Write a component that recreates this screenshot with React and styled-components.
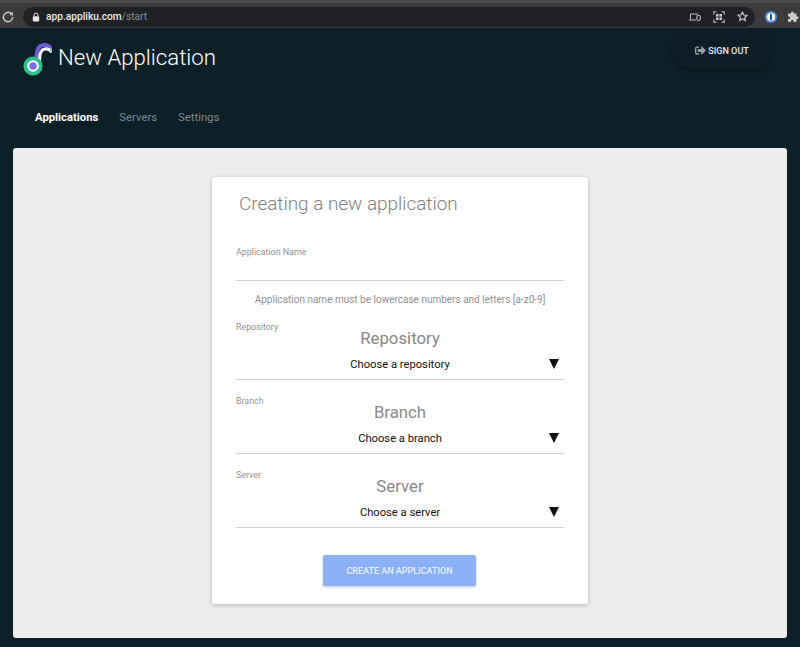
import React from "react";
import styled, { createGlobalStyle } from "styled-components";
import { FaSignOutAlt } from "react-icons/fa";

const Global = createGlobalStyle`
  html, body { margin: 0; padding: 0; background: #0d1f27; }
  body { font-family: Roboto, "Liberation Sans", sans-serif; }
  * { box-sizing: border-box; }
`;

const Page = styled.div`
  width: 800px;
  height: 647px;
  overflow: hidden;
  background: #0d1f27;
`;

const BrowserBar = styled.div`
  height: 28px;
  background: #3b3b3d;
  border-top: 3px solid #4a4a4c;
  display: flex;
  align-items: center;
  padding: 2px 6px 0 1px;
`;

const Reload = styled.svg`
  width: 14px;
  height: 14px;
  flex: none;
  margin-right: 8px;
`;

const UrlPill = styled.div`
  width: 732px;
  height: 20px;
  background: #202124;
  border-radius: 10px;
  display: flex;
  align-items: center;
  padding: 0 7px 0 9px;
  flex: none;
`;

const Lock = styled.svg`
  width: 8px;
  height: 10px;
  margin-right: 6px;
  flex: none;
`;

const Url = styled.span`
  font-size: 10.2px;
  color: #e8eaed;
  flex: 1;
  font-weight: 500;
  span { color: #8f9194; font-weight: 400; }
`;

const PillIcons = styled.div`
  display: flex;
  align-items: center;
  gap: 12px;
`;

const BarIcon = styled.svg`
  width: ${(p) => p.$size || 12}px;
  height: ${(p) => p.$size || 12}px;
  flex: none;
`;

const Extensions = styled.div`
  display: flex;
  align-items: center;
  gap: 10px;
  margin-left: 10px;
`;

const Header = styled.header`
  height: 120px;
  display: flex;
  flex-direction: column;
  padding: 14px 30px 0 23px;
`;

const TopRow = styled.div`
  display: flex;
  align-items: flex-start;
  justify-content: space-between;
  height: 50px;
`;

const Brand = styled.div`
  display: flex;
  align-items: flex-start;
  gap: 6px;
`;

const Title = styled.h1`
  margin: 0;
  font-size: 22.2px;
  line-height: 30px;
  font-weight: 300;
  color: #fff;
`;

const SignOut = styled.button`
  margin-top: -9px;
  width: 96px;
  height: 35px;
  border: none;
  border-radius: 14px;
  background: #0d1d25;
  box-shadow: 0 2px 6px rgba(0, 0, 0, 0.35);
  color: #e9ecee;
  font: 500 9.1px Roboto, sans-serif;
  display: flex;
  align-items: center;
  justify-content: center;
  gap: 2px;
`;

const Nav = styled.nav`
  display: flex;
  gap: 21px;
  padding-left: 12px;
  margin-top: 15px;
`;

const NavItem = styled.span`
  font-size: 11.3px;
  line-height: 22px;
  font-weight: ${(p) => (p.$active ? 700 : 400)};
  color: ${(p) => (p.$active ? "#fff" : "#7e8a90")};
`;

const Panel = styled.main`
  margin: 0 13px;
  height: 490px;
  background: #eeeeee;
  border-radius: 3px;
  padding-top: 29px;
  display: flex;
  justify-content: center;
`;

const Card = styled.section`
  width: 376px;
  height: 427px;
  background: #fff;
  border-radius: 3px;
  box-shadow: 0 1px 4px rgba(0, 0, 0, 0.25);
  padding: 15px 24px 0;
  display: flex;
  flex-direction: column;
`;

const CardTitle = styled.h2`
  margin: 0 0 0 3px;
  font-size: 18.9px;
  line-height: 24px;
  font-weight: 300;
  color: #7f7f7f;
`;

const SmallLabel = styled.label`
  font-size: 8.9px;
  line-height: 12px;
  color: #929292;
  display: block;
  font-weight: 400;
`;

const NameField = styled.div`
  margin-top: 30px;
  height: 35px;
  border-bottom: 1px solid #d4d4d4;
`;

const Hint = styled.p`
  margin: 12px 0 0;
  font-size: 10px;
  line-height: 14px;
  color: #929292;
  text-align: center;
`;

const SelectField = styled.div`
  margin-top: ${(p) => p.$top}px;
  height: 59px;
  border-bottom: 1px solid #d4d4d4;
  position: relative;
`;

const SelectHeading = styled.div`
  font-size: 16.8px;
  line-height: 20px;
  margin-top: -5px;
  color: #888;
  text-align: center;
`;

const SelectValue = styled.div`
  margin-top: 10px;
  font-size: 11.2px;
  line-height: 14px;
  color: #111;
  text-align: center;
`;

const Arrow = styled.svg`
  position: absolute;
  right: 5px;
  bottom: 10px;
  width: 10px;
  height: 10px;
`;

const Create = styled.button`
  align-self: center;
  margin: 27px 0 0 -1px;
  width: 153px;
  height: 31px;
  border: none;
  border-radius: 2px;
  background: #8bb0f7;
  box-shadow: 0 1px 3px rgba(60, 90, 160, 0.35);
  color: #e9f0fe;
  font: 500 9px Roboto, sans-serif;
`;

const Logo = () => (
  <svg width="29" height="34" viewBox="0 0 29 34" fill="none">
    <path d="M13.5 18 C13.5 8 15 3.5 21 3 C24 2.8 26 3.8 27.5 6" stroke="#6a5bd8" strokeWidth="4" strokeLinecap="round" />
    <path d="M16.5 18 C16.5 11.5 18 7.5 22 7 C25 6.6 27 7.6 28 9.4" stroke="#fff" strokeWidth="3.2" strokeLinecap="round" />
    <path d="M27.6 8.6 L28.4 10.2" stroke="#2cc08a" strokeWidth="1.2" strokeLinecap="round" />
    <circle cx="10" cy="24" r="7.7" stroke="#2cc08a" strokeWidth="3.8" fill="#fff" />
    <circle cx="10" cy="24" r="3.7" fill="#7c68e0" />
  </svg>
);

const Field = ({ label, value, top }) => (
  <SelectField $top={top}>
    <SmallLabel>{label}</SmallLabel>
    <SelectHeading>{label}</SelectHeading>
    <SelectValue>{value}</SelectValue>
    <Arrow viewBox="0 0 10 10"><path d="M0 0 H10 L5 10 Z" fill="#111" /></Arrow>
  </SelectField>
);

export default function App() {
  return (
    <Page>
      <Global />
      <BrowserBar>
        <Reload viewBox="0 0 24 24" fill="none" stroke="#c4c7c9" strokeWidth="2.6">
          <path d="M20 12a8 8 0 1 1-2.5-5.8L20 8.5" />
          <path d="M20.5 3v6h-6" fill="#c4c7c9" stroke="none" />
        </Reload>
        <UrlPill>
          <Lock viewBox="0 0 8 10">
            <path d="M2 4.5V3a2 2 0 0 1 4 0v1.5" fill="none" stroke="#e8eaed" strokeWidth="1" />
            <rect x="0.8" y="4.2" width="6.4" height="5.3" rx="1" fill="#e8eaed" />
          </Lock>
          <Url>app.appliku.com<span>/start</span></Url>
          <PillIcons>
            <BarIcon viewBox="0 0 16 14" fill="none" stroke="#c4c7c9" strokeWidth="1.3">
              <path d="M2 10V3h10" />
              <path d="M0 11h9" />
              <rect x="10.5" y="5" width="4.5" height="6.5" rx="0.6" />
            </BarIcon>
            <BarIcon viewBox="0 0 14 14" fill="none" stroke="#c4c7c9" strokeWidth="1.2">
              <path d="M1 4V1h3M10 1h3v3M13 10v3h-3M4 13H1v-3" />
              <rect x="3.5" y="3.5" width="3" height="3" fill="#c4c7c9" stroke="none" />
              <rect x="7.5" y="3.5" width="3" height="3" fill="#c4c7c9" stroke="none" />
              <rect x="3.5" y="7.5" width="3" height="3" fill="#c4c7c9" stroke="none" />
              <rect x="7.5" y="7.5" width="3" height="3" fill="#c4c7c9" stroke="none" />
            </BarIcon>
            <BarIcon $size={11} viewBox="0 0 24 24" fill="none" stroke="#d0d3d5" strokeWidth="2.4">
              <path d="M12 2.5l2.9 6.3 6.9.8-5.1 4.7 1.4 6.8L12 17.2 5.9 20.6l1.4-6.8-5.1-4.7 6.9-.8z" />
            </BarIcon>
          </PillIcons>
        </UrlPill>
        <Extensions>
          <BarIcon $size={12} viewBox="0 0 12 12">
            <circle cx="6" cy="6" r="6" fill="#4d8fdc" />
            <circle cx="6" cy="6" r="4" fill="#fff" />
            <rect x="5" y="2.8" width="2" height="6.4" rx="0.6" fill="#1c4f8e" />
          </BarIcon>
          <BarIcon $size={12} viewBox="0 0 24 24">
            <path d="M20.5 11H19V7a2 2 0 0 0-2-2h-4V3.5a2.5 2.5 0 0 0-5 0V5H4a2 2 0 0 0-2 2v3.8h1.5a2.7 2.7 0 0 1 0 5.4H2V20a2 2 0 0 0 2 2h3.8v-1.5a2.7 2.7 0 0 1 5.4 0V22H17a2 2 0 0 0 2-2v-4h1.5a2.5 2.5 0 0 0 0-5z" fill="#c9cbcd" />
          </BarIcon>
        </Extensions>
      </BrowserBar>
      <Header>
        <TopRow>
          <Brand>
            <Logo />
            <Title>New Application</Title>
          </Brand>
          <SignOut>
            <FaSignOutAlt size={11} color="#9aa2a6" />
            SIGN OUT
          </SignOut>
        </TopRow>
        <Nav>
          <NavItem $active>Applications</NavItem>
          <NavItem>Servers</NavItem>
          <NavItem>Settings</NavItem>
        </Nav>
      </Header>
      <Panel>
        <Card>
          <CardTitle>Creating a new application</CardTitle>
          <NameField>
            <SmallLabel>Application Name</SmallLabel>
          </NameField>
          <Hint>Application name must be lowercase numbers and letters [a-z0-9]</Hint>
          <Field label="Repository" value="Choose a repository" top={14} />
          <Field label="Branch" value="Choose a branch" top={15} />
          <Field label="Server" value="Choose a server" top={15} />
          <Create>CREATE AN APPLICATION</Create>
        </Card>
      </Panel>
    </Page>
  );
}
